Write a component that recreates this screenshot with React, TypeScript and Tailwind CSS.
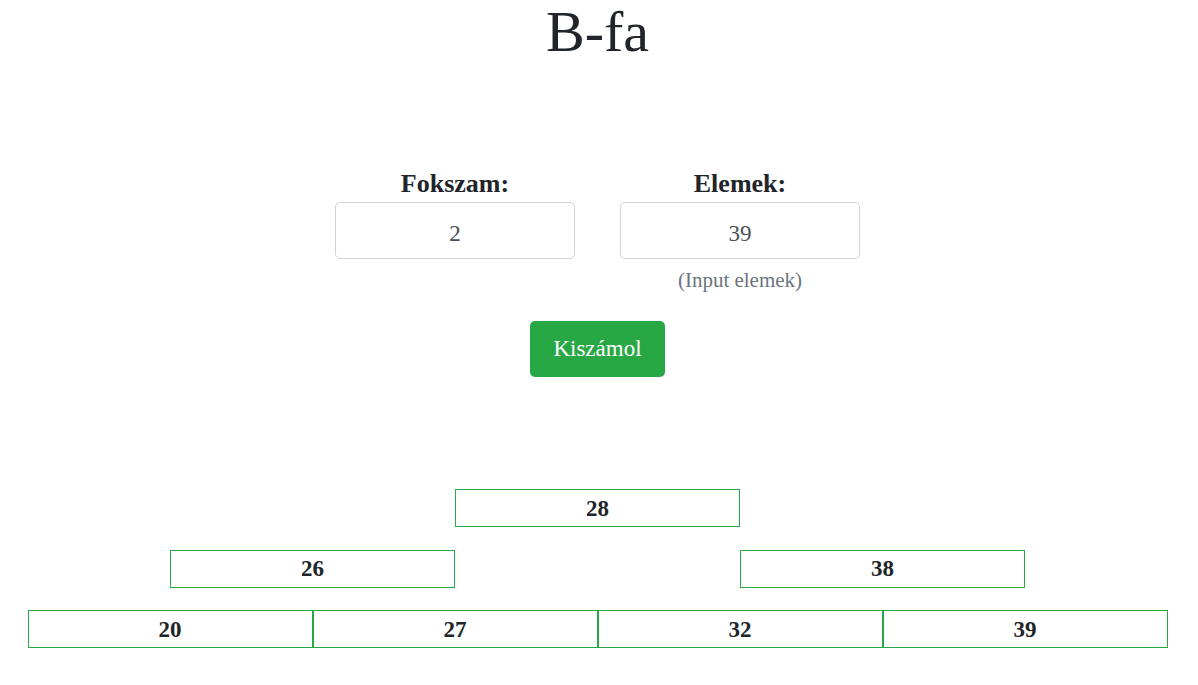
import * as React from "react";

type TreeNode = { value: number; col: string };

const levels: TreeNode[][] = [
  [{ value: 28, col: "col-start-4" }],
  [
    { value: 26, col: "col-start-2" },
    { value: 38, col: "col-start-6" },
  ],
  [
    { value: 20, col: "col-start-1" },
    { value: 27, col: "col-start-3" },
    { value: 32, col: "col-start-5" },
    { value: 39, col: "col-start-7" },
  ],
];

const serif = "font-['Georgia','Liberation_Serif','DejaVu_Serif',serif]";

function Field({ label, value, help }: { label: string; value: string; help?: string }) {
  return (
    <div className="flex w-[240px] flex-col items-center">
      <label className="h-[36px] text-[26px] font-bold leading-[36px] text-[#212529]">{label}</label>
      <input
        readOnly
        value={value}
        className="h-[57px] w-[240px] rounded-[5px] border border-[#ced4da] bg-white pt-[6px] text-center text-[23px] text-[#495057] outline-none"
      />
      {help && <small className="mt-[8px] text-[21px] leading-[26px] text-[#6c757d]">{help}</small>}
    </div>
  );
}

export default function App() {
  const [order] = React.useState("2");
  const [items] = React.useState("39");

  return (
    <div className={`min-h-[685px] bg-white pr-[3px] ${serif} text-[#212529]`}>
      <h1 className="text-center text-[58px] leading-[64px] font-normal">B-fa</h1>

      <div className="mt-[102px] flex justify-center gap-[45px]">
        <Field label="Fokszam:" value={order} />
        <Field label="Elemek:" value={items} help="(Input elemek)" />
      </div>

      <div className="mt-[28px] flex justify-center">
        <button className="h-[56px] w-[135px] rounded-[5px] bg-[#28a745] text-[23px] text-white">
          Kiszámol
        </button>
      </div>

      <div className="mx-auto mt-[112px] grid w-[1140px] grid-cols-8 gap-y-[22.5px]">
        {levels.map((lvl, i) => (
          <React.Fragment key={i}>
            {lvl.map((n) => (
              <div
                key={n.value}
                className={`${n.col} col-span-2 flex h-[38px] items-center justify-center border border-[#28a745] pt-[2px] text-[23px] font-bold`}
              >
                {n.value}
              </div>
            ))}
          </React.Fragment>
        ))}
      </div>
    </div>
  );
}
